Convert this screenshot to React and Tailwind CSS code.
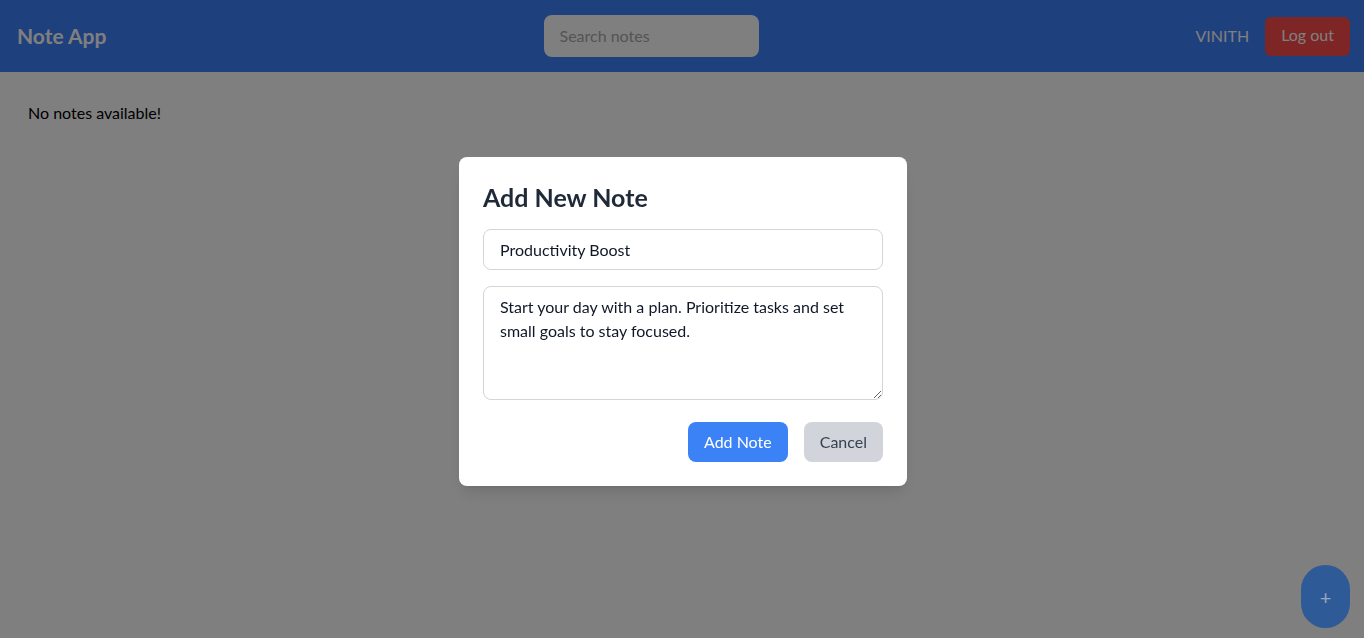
export default function App() {
  return (
    <div className="relative min-h-[638px] bg-white text-black" style={{ fontFamily: 'Lato, "Noto Sans", sans-serif' }}>
      <header className="h-[72px] bg-[#3c80fb] flex items-center justify-between pl-[17px] pr-[14px]">
        <h1 className="text-[21px] font-bold text-white">Note App</h1>
        <input
          className="w-[215px] h-[42px] rounded-lg bg-white px-4 pb-[2px] text-base text-gray-700 placeholder:text-[#a9a9a9] outline-none"
          placeholder="Search notes"
        />
        <div className="flex items-center gap-4">
          <span className="text-base text-white">VINITH</span>
          <button className="h-[39px] px-4 pb-[2px] rounded-md bg-[#fc4a4a] text-white text-base">Log out</button>
        </div>
      </header>

      <main className="px-7 pt-[29px]">
        <p className="text-base">No notes available!</p>
      </main>

      {/* overlay */}
      <div className="fixed inset-0 bg-black/50 flex justify-center pt-[157px] pl-[2px]">
        <div className="w-[448px] h-fit bg-white rounded-lg shadow-lg p-6">
          <h2 className="text-[25px] leading-8 font-bold text-[#1f2937] mb-4">Add New Note</h2>
          <input
            className="block w-full h-[41px] border border-gray-300 rounded-lg px-4 text-base text-gray-900 mb-4 outline-none"
            defaultValue="Productivity Boost"
          />
          <textarea
            rows={4}
            className="block w-full h-[114px] border border-gray-300 rounded-lg px-4 py-2 text-base leading-6 text-gray-900 mb-[22px] outline-none"
            defaultValue="Start your day with a plan. Prioritize tasks and set small goals to stay focused."
          />
          <div className="flex justify-end gap-4">
            <button className="h-10 px-4 pb-[1px] rounded-lg bg-[#3b82f6] text-white text-base">Add Note</button>
            <button className="h-10 px-4 pb-[1px] rounded-lg bg-[#d1d5db] text-[#374151] text-base">Cancel</button>
          </div>
        </div>
      </div>

      <button className="fixed right-[14px] bottom-[10px] w-[49px] h-[63px] rounded-full bg-[#2e5b98] text-[#98a6bb] text-xl">+</button>
    </div>
  );
}
